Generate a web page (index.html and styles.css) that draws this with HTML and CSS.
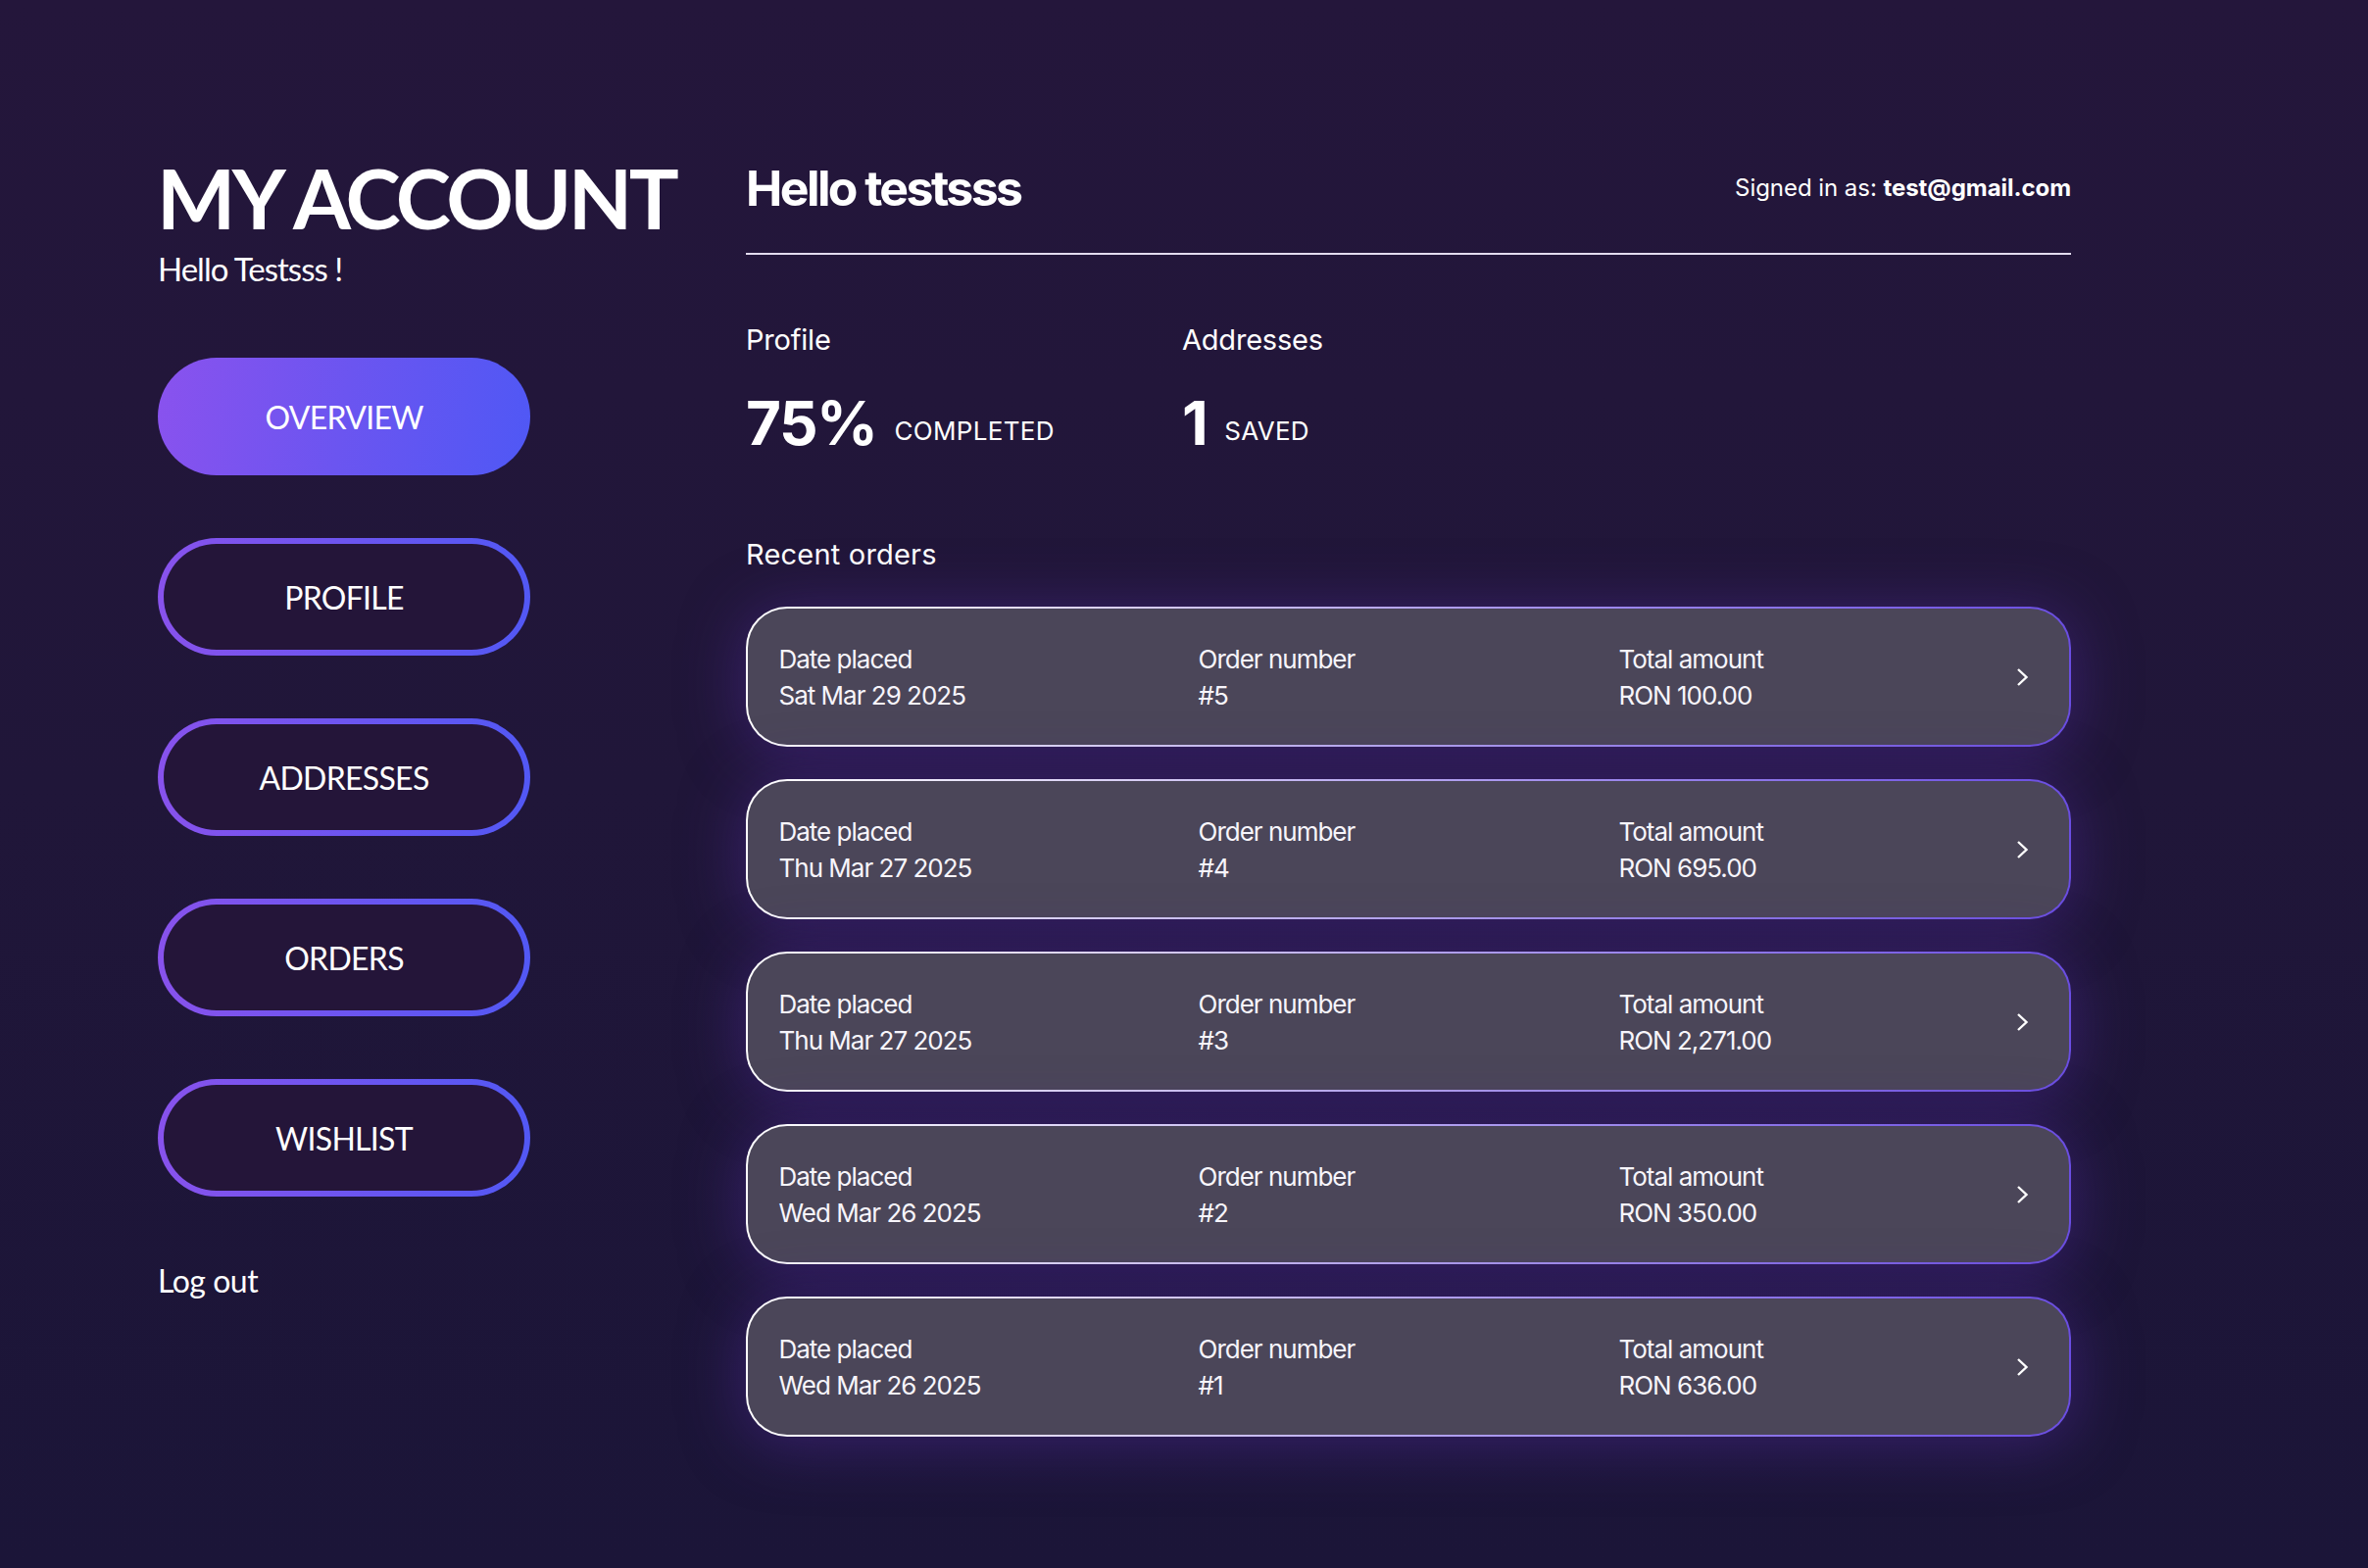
FILE: index.html
```html
<!DOCTYPE html>
<html lang="en">
<head>
<meta charset="utf-8">
<title>My Account</title>
<link rel="stylesheet" href="styles.css">
</head>
<body>
<div class="page">
  <aside class="sidebar">
    <h1 class="title">MY ACCOUNT</h1>
    <p class="greeting">Hello Testsss !</p>
    <nav class="nav">
      <a class="nav-btn active">OVERVIEW</a>
      <a class="nav-btn">PROFILE</a>
      <a class="nav-btn">ADDRESSES</a>
      <a class="nav-btn">ORDERS</a>
      <a class="nav-btn">WISHLIST</a>
    </nav>
    <a class="logout">Log out</a>
  </aside>

  <main class="main">
    <header class="header">
      <h2 class="hello">Hello testsss</h2>
      <p class="signed">Signed in as: <strong>test@gmail.com</strong></p>
    </header>

    <section class="stats">
      <div class="stat stat-profile">
        <div class="stat-label">Profile</div>
        <div class="stat-value"><span class="big">75%</span><span class="small">COMPLETED</span></div>
      </div>
      <div class="stat">
        <div class="stat-label">Addresses</div>
        <div class="stat-value"><span class="big">1</span><span class="small">SAVED</span></div>
      </div>
    </section>

    <section class="orders">
      <h3 class="orders-title">Recent orders</h3>
      <div class="order-list">
        <div class="order">
          <div class="col"><span>Date placed</span><span>Sat Mar 29 2025</span></div>
          <div class="col"><span>Order number</span><span>#5</span></div>
          <div class="col"><span>Total amount</span><span>RON 100.00</span></div>
          <svg class="chev" width="14" height="18" viewBox="0 0 14 18"><path d="M3 1 L11.5 9 L3 17" fill="none" stroke="#fff" stroke-width="2.4"/></svg>
        </div>
        <div class="order">
          <div class="col"><span>Date placed</span><span>Thu Mar 27 2025</span></div>
          <div class="col"><span>Order number</span><span>#4</span></div>
          <div class="col"><span>Total amount</span><span>RON 695.00</span></div>
          <svg class="chev" width="14" height="18" viewBox="0 0 14 18"><path d="M3 1 L11.5 9 L3 17" fill="none" stroke="#fff" stroke-width="2.4"/></svg>
        </div>
        <div class="order">
          <div class="col"><span>Date placed</span><span>Thu Mar 27 2025</span></div>
          <div class="col"><span>Order number</span><span>#3</span></div>
          <div class="col"><span>Total amount</span><span>RON 2,271.00</span></div>
          <svg class="chev" width="14" height="18" viewBox="0 0 14 18"><path d="M3 1 L11.5 9 L3 17" fill="none" stroke="#fff" stroke-width="2.4"/></svg>
        </div>
        <div class="order">
          <div class="col"><span>Date placed</span><span>Wed Mar 26 2025</span></div>
          <div class="col"><span>Order number</span><span>#2</span></div>
          <div class="col"><span>Total amount</span><span>RON 350.00</span></div>
          <svg class="chev" width="14" height="18" viewBox="0 0 14 18"><path d="M3 1 L11.5 9 L3 17" fill="none" stroke="#fff" stroke-width="2.4"/></svg>
        </div>
        <div class="order">
          <div class="col"><span>Date placed</span><span>Wed Mar 26 2025</span></div>
          <div class="col"><span>Order number</span><span>#1</span></div>
          <div class="col"><span>Total amount</span><span>RON 636.00</span></div>
          <svg class="chev" width="14" height="18" viewBox="0 0 14 18"><path d="M3 1 L11.5 9 L3 17" fill="none" stroke="#fff" stroke-width="2.4"/></svg>
        </div>
      </div>
    </section>
  </main>
</div>
</body>
</html>
```

FILE: styles.css
```css
* { box-sizing: border-box; }
html, body {
  margin: 0;
  padding: 0;
}
body {
  width: 2416px;
  height: 1600px;
  overflow: hidden;
  background: linear-gradient(180deg, #24163b 0%, #201639 50%, #1b1538 100%);
  color: #fff;
  font-family: "Inter", "Liberation Sans", sans-serif;
}
.page {
  display: flex;
  gap: 40px;
  padding: 159px 0 0 161px;
}

/* Sidebar */
.sidebar {
  width: 560px;
  flex: 0 0 560px;
  display: flex;
  flex-direction: column;
  font-family: "Lato", "Liberation Sans", sans-serif;
}
.title {
  margin: 0 0 0 -1px;
  font-size: 85px;
  line-height: 85px;
  font-weight: 700;
  letter-spacing: -3.6px;
  white-space: nowrap;
}
.greeting {
  margin: 10px 0 0 0;
  font-size: 33px;
  line-height: 40px;
  font-weight: 400;
  letter-spacing: -1px;
}
.nav {
  margin-top: 71px;
  display: flex;
  flex-direction: column;
  gap: 64px;
}
.nav-btn {
  width: 380px;
  height: 120px;
  border-radius: 60px;
  display: flex;
  align-items: center;
  justify-content: center;
  font-size: 32px;
  letter-spacing: -0.7px;
  color: #fff;
  border: 6px solid transparent;
  background:
    linear-gradient(#241539, #241539) padding-box,
    linear-gradient(90deg, #8852ec 0%, #5258f4 100%) border-box;
}
.nav-btn.active {
  border: 0;
  background: linear-gradient(100deg, #8a52ee 0%, #6b55f0 50%, #4f58f5 100%);
}
.logout {
  margin: 67px 0 0 0;
  font-size: 32px;
  line-height: 38px;
  letter-spacing: -0.5px;
}

/* Main */
.main {
  width: 1352px;
  flex: 0 0 1352px;
  margin-top: 3px;
}
.header {
  display: flex;
  justify-content: space-between;
  align-items: flex-start;
  padding-bottom: 36px;
  border-bottom: 2px solid #e3dcef;
}
.hello {
  margin: 0;
  font-size: 50px;
  line-height: 60px;
  font-weight: 700;
  letter-spacing: -2.6px;
}
.signed {
  margin: 15px 0 0;
  font-size: 24px;
  line-height: 30px;
  letter-spacing: -0.05px;
}
.signed strong { font-weight: 700; }

.stats {
  display: flex;
  margin-top: 70px;
}
.stat-profile {
  flex: 0 0 445px;
}
.stat-label {
  font-size: 29px;
  line-height: 34px;
  letter-spacing: -0.2px;
}
.stat-value {
  margin-top: 37px;
  display: flex;
  align-items: flex-end;
  gap: 18px;
}
.big {
  font-size: 62px;
  line-height: 62px;
  font-weight: 700;
  letter-spacing: -1.5px;
}
.small {
  font-size: 26px;
  line-height: 31px;
  margin-bottom: 8px;
  letter-spacing: 0.3px;
}

.orders-title {
  margin: 86px 0 0;
  font-size: 29px;
  line-height: 34px;
  font-weight: 400;
  letter-spacing: 0.2px;
}
.order-list {
  margin-top: 36px;
  display: flex;
  flex-direction: column;
  gap: 33px;
}
.order {
  height: 143px;
  border-radius: 42px;
  border: 2.5px solid transparent;
  background:
    linear-gradient(#4b4659, #4b4659) padding-box,
    linear-gradient(90deg, #ffffff 0%, #d6ccf5 30%, #a491ee 60%, #6a4de2 100%) border-box;
  box-shadow: 0 6px 60px 4px rgba(78, 42, 150, 0.5);
  display: grid;
  grid-template-columns: 428px 429px 1fr auto;
  align-items: center;
  padding: 0 41px 0 31.5px;
}
.col {
  display: flex;
  flex-direction: column;
  font-size: 26px;
  line-height: 37px;
  letter-spacing: -1px;
  color: #f7f5fb;
}
.chev {
  display: block;
}
```
